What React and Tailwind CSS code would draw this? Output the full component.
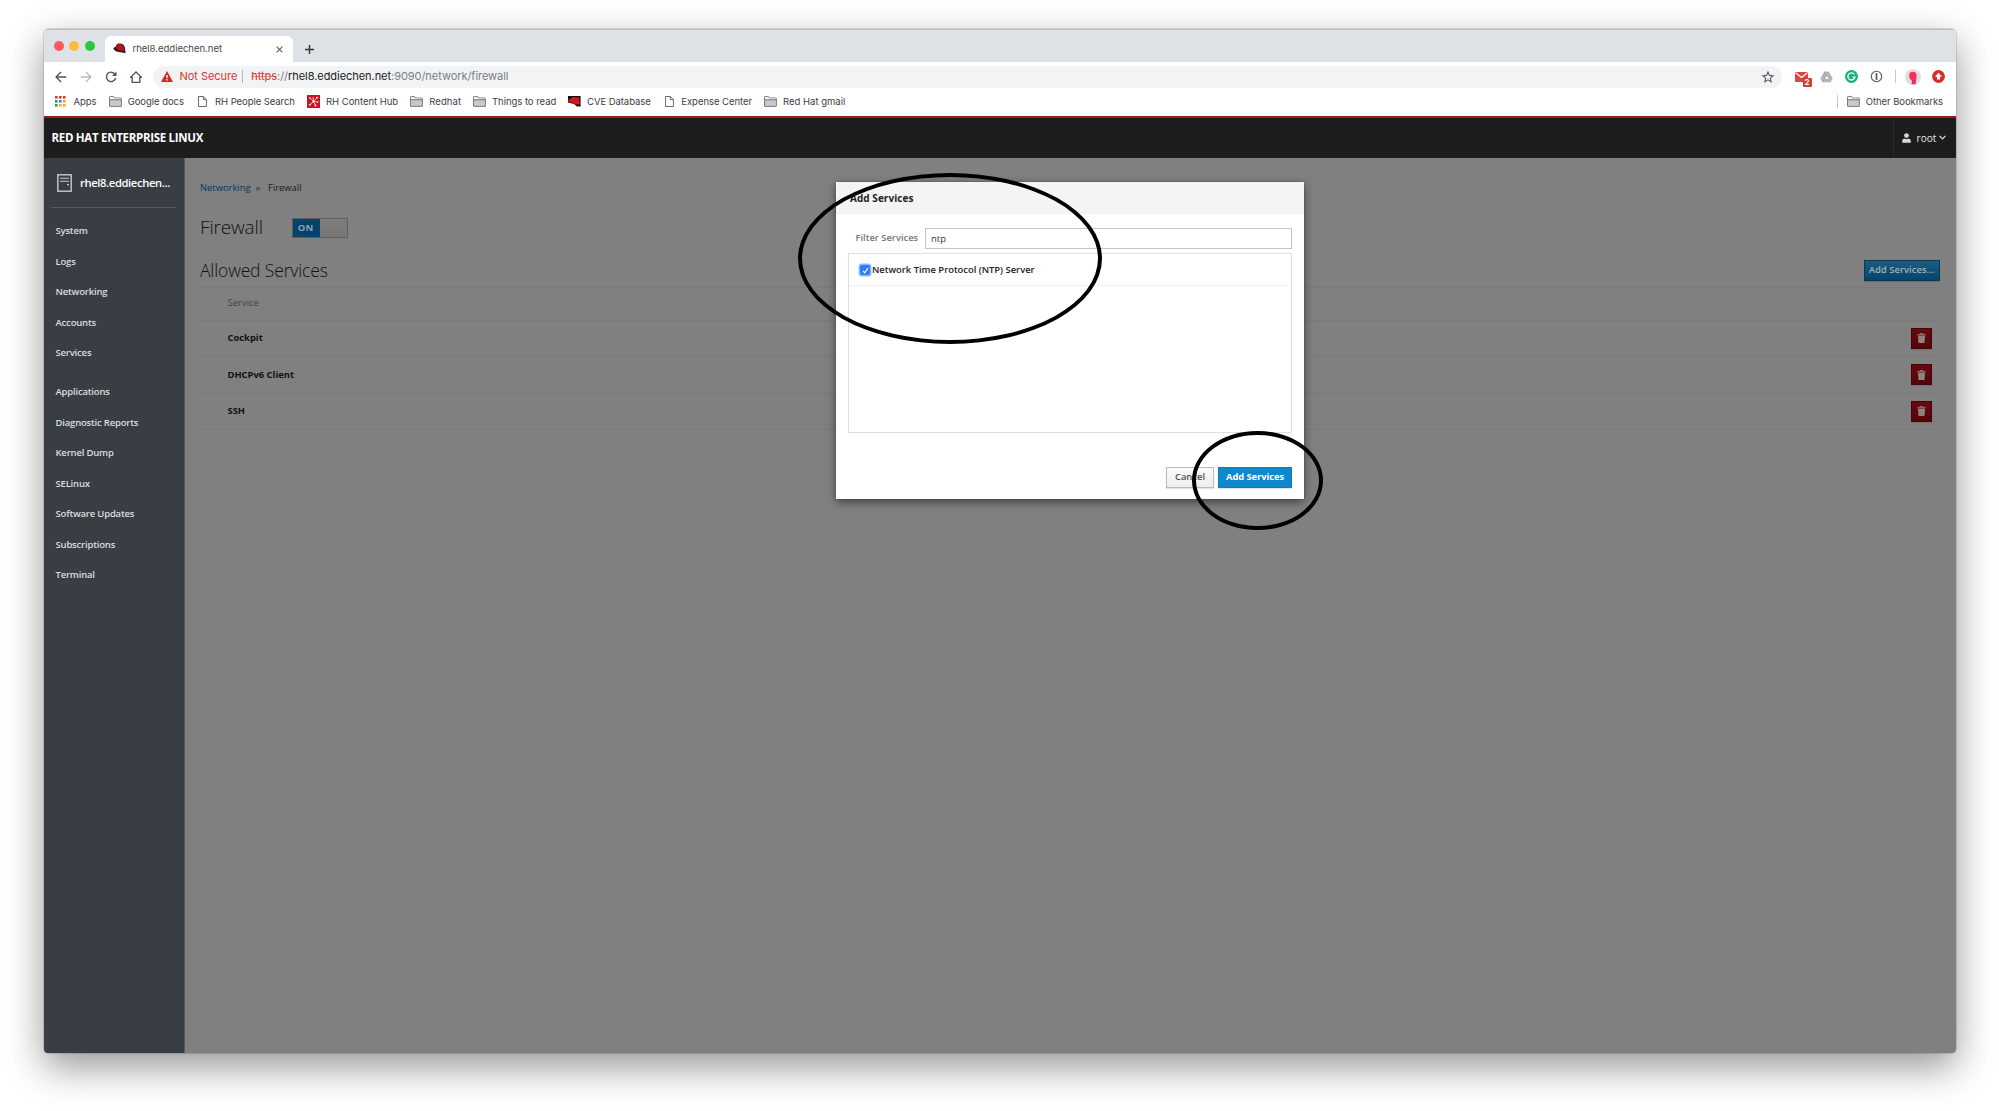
import React from "react";

const Folder = () => (
  <svg width="13" height="11" viewBox="0 0 13 11" className="shrink-0">
    <path d="M.5 10V1.2Q.5.6 1.1.6H4.6L5.8 2H11.8Q12.4 2 12.4 2.6V10Q12.4 10.4 12 10.4H1Q.5 10.4.5 10Z" fill="#c9c9c9" stroke="#6e6e6e" strokeWidth=".9" />
    <path d="M1 1.2H4.3L5.4 2.6H12V3.2H1Z" fill="#fff" />
    <path d="M1 3.8H12" stroke="#6e6e6e" strokeWidth=".9" />
  </svg>
);
const PageIcon = () => (
  <svg width="9" height="11" viewBox="0 0 9 11" className="shrink-0">
    <path d="M.5.5H5.3L8.4 3.6V10.5H.5ZM5.3.5V3.6H8.4" fill="#fff" stroke="#5c5c5c" strokeWidth=".9" />
  </svg>
);
const Apps = () => (
  <svg width="11" height="11" viewBox="0 0 11 11" className="shrink-0">
    {["#e8382c", "#e8382c", "#e8382c", "#1ea446", "#3f7ff0", "#f5a623", "#1ea446", "#f5a623", "#f5a623"].map((c, i) => (
      <rect key={i} x={(i % 3) * 4} y={Math.floor(i / 3) * 4} width="2.6" height="2.6" fill={c} />
    ))}
  </svg>
);
const Hub = () => (
  <svg width="13" height="13" viewBox="0 0 13 13" className="shrink-0">
    <rect width="13" height="13" fill="#cc1224" />
    <path d="M6.5 6.5 3 3M6.5 6.5 10 2.5M6.5 6.5 11 7M6.5 6.5 8.5 10.5M6.5 6.5 3 9.5M6.5 6.5 6 2" stroke="#fff" strokeWidth=".7" />
    <g fill="#fff"><circle cx="6.5" cy="6.5" r="1.1" /><circle cx="3" cy="3" r=".8" /><circle cx="10" cy="2.7" r=".9" /><circle cx="10.8" cy="7" r=".7" /><circle cx="8.5" cy="10.5" r=".9" /><circle cx="3" cy="9.7" r=".9" /></g>
  </svg>
);
const HatSquare = () => (
  <svg width="13" height="11" viewBox="0 0 13 11" className="shrink-0">
    <path d="M0 0H12.6V10.5H9L6 8 0 6.5Z" fill="#151010" />
    <path d="M.4 3.6 3 2.8 4.6.8 8 1.5 11 1.2 11.6 5.5 12 8.3 8 8.4 3.5 6.4.4 5.4Z" fill="#d9141a" />
  </svg>
);
const Hat = () => (
  <svg width="13" height="11" viewBox="0 0 13 11" className="shrink-0">
    <path d="M.3 5.2Q1.5 4 2.6 4 3.6.6 5.8.5 8.5.2 10.5 1.8 12.2 3.5 12.2 7L12.6 10 9 9.6 3.5 8.6Q.6 7 .3 5.2Z" fill="#241414" />
    <path d="M3 4.4Q4.2 1.1 6 1 8.6.8 10.2 2.4 11.7 4 11.5 7.8L8 8 3.8 6.6Z" fill="#b5121b" />
  </svg>
);

const bookmarks = [
  { icon: <Apps />, text: "Apps", cell: "w-[54px]", box: "w-[18.5px]", tr: "tracking-[-0.1px]" },
  { icon: <Folder />, text: "Google docs", cell: "w-[89px]", box: "w-[18.7px]", tr: "tracking-[-0.05px]" },
  { icon: <PageIcon />, text: "RH People Search", cell: "w-[109px]", box: "w-[17px]", tr: "tracking-[-0.07px]" },
  { icon: <Hub />, text: "RH Content Hub", cell: "w-[103px]", box: "w-[19px]", tr: "tracking-[-0.03px]" },
  { icon: <Folder />, text: "Redhat", cell: "w-[63px]", box: "w-[19.3px]", tr: "tracking-[0.08px]" },
  { icon: <Folder />, text: "Things to read", cell: "w-[95px]", box: "w-[19px]", tr: "tracking-[-0.04px]" },
  { icon: <HatSquare />, text: "CVE Database", cell: "w-[97px]", box: "w-[19px]", tr: "tracking-[-0.05px]" },
  { icon: <PageIcon />, text: "Expense Center", cell: "w-[99px]", box: "w-[16.3px]", tr: "tracking-[-0.04px]" },
  { icon: <Folder />, text: "Red Hat gmail", cell: "w-[90px]", box: "w-[19px]", tr: "" },
];

const mainNav = ["System", "Logs", "Networking", "Accounts", "Services"];
const toolsNav = ["Applications", "Diagnostic Reports", "Kernel Dump", "SELinux", "Software Updates", "Subscriptions", "Terminal"];

const NavItem = ({ children }) => (
  <div className="flex h-[30.5px] items-center whitespace-nowrap text-[9.5px] tracking-[-0.19px]">{children}</div>
);

const Trash = () => (
  <div className="flex h-[21px] w-[21px] items-center justify-center border border-[#440508] bg-linear-to-b from-[#6b080d] to-[#52060a] shadow-[0_1px_1px_rgba(0,0,0,0.1)]">
    <svg width="9" height="10" viewBox="0 0 9 10">
      <path d="M3 1.4V.5H6V1.4" stroke="#8d8383" strokeWidth=".8" fill="none" />
      <path d="M.3 1.3H8.7V2.5H.3ZM1 3H8L7.6 9.2Q7.5 9.9 6.9 9.9H2.1Q1.5 9.9 1.4 9.2Z" fill="#8d8383" />
    </svg>
  </div>
);

export default function App() {
  return (
    <div className="relative h-[1111px] w-[1999px] overflow-hidden bg-white pl-[44px] pt-[29px] font-['Open_Sans',sans-serif] text-[10px] leading-none">
      <div className="flex h-[1023.5px] w-[1911.5px] flex-col overflow-hidden rounded-[4px] bg-white shadow-[0_0_0_0.5px_rgba(0,0,0,0.25),0_14px_38px_rgba(0,0,0,0.42)]">
        {/* tab strip */}
        <div className="flex h-[33px] shrink-0 border-t border-[#bcbec1] bg-[#dee1e6] font-[Inter,sans-serif]">
          <div className="flex w-[61px] items-center gap-[5.7px] pb-[1px] pl-[9.5px]">
            <i className="size-[10px] rounded-full bg-[#fc5b57]" />
            <i className="size-[10px] rounded-full bg-[#fdbc40]" />
            <i className="size-[10px] rounded-full bg-[#27c840]" />
          </div>
          <div className="mt-[6px] flex w-[188px] items-center rounded-t-[6px] bg-white pl-[8px] pr-[10px]">
            <div className="mb-[2px]"><Hat /></div>
            <span className="ml-[6.5px] whitespace-nowrap text-[9.6px] tracking-[-0.06px] text-[#45494d]">rhel8.eddiechen.net</span>
            <svg className="ml-auto mt-[1px]" width="7" height="7" viewBox="0 0 7 7"><path d="M.6.6 6.4 6.4M6.4.6.6 6.4" stroke="#5a5e62" strokeWidth="1.1" /></svg>
          </div>
          <svg className="ml-[12px] mt-[15px]" width="9" height="9" viewBox="0 0 9 9"><path d="M4.5 0V9M0 4.5H9" stroke="#303336" strokeWidth="1.4" /></svg>
        </div>
        {/* toolbar */}
        <div className="flex h-[29px] shrink-0 items-center pl-[10.5px] font-[Inter,sans-serif]">
          <div className="flex w-[98px] items-center gap-[13.1px]">
            <svg width="12" height="12" viewBox="0 0 12 12" fill="none" stroke="#50545a" strokeWidth="1.4"><path d="M11.3 6H1.2M6 1 1.1 6 6 11" /></svg>
            <svg width="12" height="12" viewBox="0 0 12 12" fill="none" stroke="#b9bbbe" strokeWidth="1.3"><path d="M.7 6H10.8M6 1 10.9 6 6 11" /></svg>
            <svg width="12" height="12" viewBox="0 0 12 12" fill="none"><path d="M10 3.2A4.7 4.7 0 1 0 10.7 7" stroke="#50545a" strokeWidth="1.4" /><path d="M11.5.6V5H7.1Z" fill="#50545a" /></svg>
            <svg width="12" height="12" viewBox="0 0 12 12" fill="none" stroke="#50545a" strokeWidth="1.3"><path d="M.5 6.4 6 1 11.5 6.4H9.8V11.3H2.2V6.4Z" /></svg>
          </div>
          <div className="flex h-[22px] w-[1629px] items-center rounded-full bg-[#f1f3f4] pl-[8.5px] pr-[8px]">
            <svg width="12" height="11" viewBox="0 0 12 11"><path d="M6 0 12 11H0Z" fill="#d02c22" /><path d="M6 4V7M6 8V9.4" stroke="#fff" strokeWidth="1.3" /></svg>
            <span className="ml-[6.5px] whitespace-nowrap text-[11px] tracking-[-0.04px] text-[#d8362b]">Not Secure</span>
            <i className="ml-[5px] h-[13px] w-px bg-[#b4b7ba]" />
            <span className="ml-[8px] whitespace-nowrap text-[11px] tracking-[-0.05px] text-[#7a7f85]"><span className="text-[#d8362b] line-through decoration-[#d8362b]/50 decoration-[1px]">https</span>://<span className="text-[#202124]">rhel8.eddiechen.net</span>:9090/network/firewall</span>
            <svg className="ml-auto" width="12" height="12" viewBox="0 0 12 12"><path d="M6 .9 7.4 4.4 11.2 4.7 8.3 7.1 9.2 10.8 6 8.8 2.8 10.8 3.7 7.1.8 4.7 4.6 4.4Z" fill="none" stroke="#5a5e66" strokeWidth="1.1" /></svg>
          </div>
          <div className="relative ml-[13px] h-[12px] w-[25px]">
            <svg width="13" height="10" viewBox="0 0 13 10" className="mt-[1px]"><rect width="13" height="10" rx=".8" fill="#e0443a" /><path d="M.6.8 6.5 5.4 12.4.8" stroke="#fff" strokeWidth="1.3" fill="none" /></svg>
            <span className="absolute left-[8px] top-[7px] flex h-[9.5px] w-[9px] items-center justify-center rounded-[1px] bg-[#dc3a30] text-[8px] font-bold text-white">2</span>
          </div>
          <svg width="13" height="12" viewBox="0 0 13 12"><path d="M4.3.5H8.7L12.7 7.6 10.6 11.3H2.4L.3 7.6Z" fill="#b5b5b5" /><path d="M6.5 4.6 8.4 7.9H4.6Z" fill="#fff" /><path d="M4.4.8 6.5 4.4 2.6 11" stroke="#989898" strokeWidth=".6" fill="none" /></svg>
          <svg className="ml-[12px]" width="13" height="13" viewBox="0 0 13 13"><circle cx="6.5" cy="6.5" r="6.5" fill="#15b377" /><path d="M9.4 4.3A3.6 3.6 0 1 0 10 7.1H7.4" stroke="#fff" strokeWidth="1.3" fill="none" /></svg>
          <svg className="ml-[12px]" width="13" height="13" viewBox="0 0 13 13"><circle cx="6.5" cy="6.5" r="5.2" fill="#fff" stroke="#55585c" strokeWidth="1.1" /><path d="M6.5 3.3V9.7" stroke="#55585c" strokeWidth="1.7" /><path d="M5.3 3.6H6.5M6.5 9.4H7.7" stroke="#55585c" strokeWidth=".7" /></svg>
          <i className="ml-[12px] h-[13px] w-px bg-[#c4c6c9]" />
          <svg className="ml-[9px]" width="16" height="16" viewBox="0 0 16 16"><circle cx="8" cy="8" r="8" fill="#dedede" /><path d="M4.2 5.8Q4.4 3 8 2.8 11.6 3 11.6 6.5L11.2 11Q10.8 12 10.8 15.3H6.5Q7.2 13 6.6 11.3 4.4 10.5 4.2 8Z" fill="#fb2d5c" /><path d="M7.6 11.8H9.6" stroke="#a71b3c" strokeWidth=".7" /></svg>
          <svg className="ml-[11px]" width="13" height="13" viewBox="0 0 13 13"><circle cx="6.5" cy="6.5" r="6.4" fill="#d42f25" /><path d="M6.5 2.8 10 6.7H8V9.6H5V6.7H3Z" fill="#fff" /></svg>
        </div>
        {/* bookmarks */}
        <div className="flex h-[25px] shrink-0 items-center pb-[4px] pl-[11px] pr-[12.5px] font-[Inter,sans-serif] text-[9.5px] text-[#3d4043]">
          {bookmarks.map((b) => (
            <div key={b.text} className={`flex shrink-0 items-center ${b.cell}`}>
              <div className={`flex shrink-0 ${b.box}`}>{b.icon}</div>
              <span className={`whitespace-nowrap ${b.tr}`}>{b.text}</span>
            </div>
          ))}
          <div className="ml-auto flex items-center">
            <i className="mr-[8.5px] h-[13px] w-px bg-[#c4c6c9]" />
            <Folder />
            <span className="ml-[6px] whitespace-nowrap tracking-[-0.07px]">Other Bookmarks</span>
          </div>
        </div>
        {/* masthead */}
        <div className="flex h-[42px] shrink-0 items-stretch border-t-2 border-[#9b1b1e] bg-[#1d1d1d] pb-[1px] text-white">
          <div className="flex items-center pl-[7.5px]">
            <span className="whitespace-nowrap text-[11.5px] font-bold tracking-[-0.3px]">RED HAT ENTERPRISE LINUX</span>
          </div>
          <div className="ml-auto flex w-[63px] items-center border-l border-[#2b2b2b] pl-[8px]">
            <svg width="9" height="10" viewBox="0 0 9 10"><circle cx="4.5" cy="2.6" r="2.4" fill="#d6d6d6" /><path d="M.2 9.7V7.8Q.4 5.9 2.2 5.5 4.5 6.6 6.8 5.5 8.6 5.9 8.8 7.8V9.7Z" fill="#d6d6d6" /></svg>
            <span className="ml-[6px] text-[10px] tracking-[0.05px] text-[#e6e6e6]">root</span>
            <svg className="ml-[3px]" width="7" height="5" viewBox="0 0 7 5"><path d="M.6.8 3.5 3.8 6.4.8" fill="none" stroke="#e0e0e0" strokeWidth="1.2" /></svg>
          </div>
        </div>
        <div className="flex min-h-0 flex-1">
          {/* sidebar */}
          <div className="flex w-[141px] shrink-0 flex-col border-r border-[#565a5e] bg-[#393e45] text-[#dcdddd]">
            <div className="ml-[7px] mr-[8px] flex h-[50px] shrink-0 items-center border-b border-[#565b61] pl-[6px]">
              <svg className="mt-[1px] shrink-0" width="15" height="18" viewBox="0 0 15 18" fill="none" stroke="#c9cbcd"><rect x=".8" y=".8" width="13.4" height="16.4" strokeWidth="1.4" /><path d="M3 4.3H12M3 7.3H12" strokeWidth="1.1" /><path d="M10 10.6H12" strokeWidth="1.4" /></svg>
              <span className="ml-[8px] whitespace-nowrap text-[11.2px] font-semibold tracking-[-0.36px] text-white">rhel8.eddiechen...</span>
            </div>
            <div className="mt-[7.5px] flex flex-col pl-[11.5px] font-semibold">
              {mainNav.map((t) => <NavItem key={t}>{t}</NavItem>)}
            </div>
            <div className="mt-[8.5px] flex flex-col pl-[11.5px] font-semibold">
              {toolsNav.map((t) => <NavItem key={t}>{t}</NavItem>)}
            </div>
          </div>
          {/* page */}
          <div className="flex min-w-0 flex-1 flex-col bg-[#808080] pl-[15px] pr-[16px]">
            <div className="mt-[21.5px] flex h-[16px] shrink-0 items-center text-[9.4px] text-[#1a1d20]">
              <span className="text-[#00395e]">Networking</span>
              <span className="ml-[5px] w-[12.5px] text-[#333]">»</span>
              <span>Firewall</span>
            </div>
            <div className="mt-[19px] flex h-[26px] shrink-0 items-center text-[#111]">
              <div className="w-[91.5px]"><span className="text-[19px] font-light tracking-[-0.16px]">Firewall</span></div>
              <div className="flex h-[20px] w-[56px] border border-[#5e5e5e] bg-linear-to-b from-[#7d7d7d] to-[#767676]">
                <div className="flex w-[27px] items-center justify-center bg-[#05436a] pr-[1px] text-[9.5px] font-bold text-[#8fa1ad]">ON</div>
              </div>
            </div>
            <div className="mb-[1px] mt-[15px] flex h-[30px] shrink-0 items-center justify-between">
              <span className="whitespace-nowrap text-[17.5px] font-light tracking-[-0.14px] text-[#111]">Allowed Services</span>
              <div className="mb-[1px] flex h-[21px] w-[76px] items-center justify-center border border-[#053b57] bg-linear-to-b from-[#1d5c80] to-[#05456b] pb-[1px] text-[9.5px] font-semibold text-[#9db0bc] shadow-[0_1px_1px_rgba(0,0,0,0.12)]"><span className="whitespace-nowrap">Add Services...</span></div>
            </div>
            <div className="flex h-[33px] shrink-0 items-center border-t border-[#7a7a7a] pb-[1px] pl-[27.5px] text-[9.5px] text-[#444]">Service</div>
            {["Cockpit", "DHCPv6 Client", "SSH"].map((t) => (
              <div key={t} className="flex h-[36.6px] shrink-0 items-center justify-between border-t border-[#7a7a7a] pl-[27.5px] pr-[8px] text-[9.4px] font-bold text-[#111]">
                <span className="mb-[1px] whitespace-nowrap">{t}</span><Trash />
              </div>
            ))}
            <div className="h-px shrink-0 bg-[#7a7a7a]" />
          </div>
        </div>
      </div>

      {/* dialog */}
      <div className="absolute left-[836px] top-[182px] flex h-[317px] w-[467.5px] flex-col bg-white shadow-[0_3px_9px_rgba(0,0,0,0.5),0_0_1px_rgba(0,0,0,0.4)]">
        <div className="flex h-[32px] items-center bg-[#f4f4f4] pl-[14px] text-[10px] font-bold tracking-[0.05px] text-[#222]">Add Services</div>
        <div className="mt-[14px] flex h-[21px] items-center pl-[19.5px]">
          <div className="w-[69.5px] whitespace-nowrap pb-[1px] text-[9.4px] font-semibold text-[#777]">Filter Services</div>
          <div className="flex h-[21px] w-[367px] items-center border border-[#c4c4c4] pl-[5px] text-[9.5px] text-[#363636]">ntp</div>
        </div>
        <div className="ml-[12px] mt-[4px] h-[180px] w-[444px] border border-[#e0e0e0]">
          <div className="flex h-[32px] items-center border-b border-[#f2f2f2] pl-[11px]">
            <div className="mt-[1px] flex size-[10px] items-center justify-center rounded-[2px] bg-[#2f7cf6] shadow-[0_0_0_1.5px_#8fbcfb]">
              <svg width="7" height="7" viewBox="0 0 7 7"><path d="M1 3.8 2.8 5.8 6 1" fill="none" stroke="#fff" strokeWidth="1.2" /></svg>
            </div>
            <span className="ml-[2px] whitespace-nowrap text-[9.4px] font-semibold text-[#222]">Network Time Protocol (NTP) Server</span>
          </div>
        </div>
        <div className="mt-[34px] flex gap-[4px] pl-[330px] text-[9.4px]">
          <div className="flex h-[21px] w-[48px] items-center justify-center border border-[#bbb] bg-linear-to-b from-[#fafafa] to-[#ededed] pb-[1px] font-semibold text-[#4d5258] shadow-[0_1px_1px_rgba(0,0,0,0.1)]">Cancel</div>
          <div className="flex h-[21px] w-[74px] items-center justify-center whitespace-nowrap border border-[#0a7fc0] bg-[#0f88ce] pb-[1px] font-bold tracking-[-0.08px] text-white shadow-[0_1px_1px_rgba(0,0,0,0.1)]">Add Services</div>
        </div>
      </div>

      {/* hand-placed highlight rings */}
      <div className="absolute left-[797.5px] top-[172.5px] h-[171px] w-[304px] rounded-[50%] border-4 border-black" />
      <div className="absolute left-[1192px] top-[430.5px] h-[99.5px] w-[131px] rounded-[50%] border-4 border-black" />
    </div>
  );
}
